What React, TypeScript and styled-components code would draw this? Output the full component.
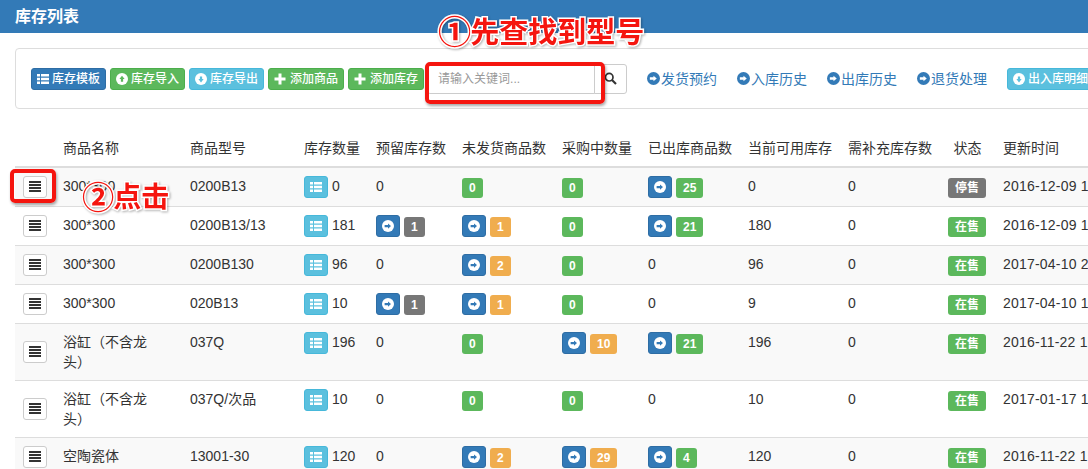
import styled, { createGlobalStyle } from "styled-components";

const GlobalStyle = createGlobalStyle`
  html, body {
    margin: 0;
    padding: 0;
    background: #fff;
  }
  body {
    font-family: "Liberation Sans", "Noto Sans CJK SC", sans-serif;
    font-size: 14px;
    line-height: 20px;
    color: #333;
    text-spacing-trim: space-all;
  }
`;

const Page = styled.div`
  position: relative;
  width: 1088px;
  height: 469px;
  overflow: hidden;
`;

const Header = styled.div`
  height: 33px;
  width: 1088px;
  padding: 0 15px;
  box-sizing: border-box;
  display: flex;
  align-items: center;
  background-color: #337ab7;
  color: #fff;
  font-size: 16px;
  font-weight: 700;
`;

const Content = styled.div`
  width: 1300px;
  padding: 15px 0 0 15px;
  box-sizing: border-box;
`;

const Toolbar = styled.div`
  height: 61px;
  box-sizing: border-box;
  display: flex;
  align-items: center;
  gap: 4px;
  padding: 0 15px;
  border: 1px solid #ddd;
  border-radius: 4px;
`;

const colors = {
  primary: ["#337ab7", "#2e6da4"],
  success: ["#5cb85c", "#4cae4c"],
  info: ["#5bc0de", "#46b8da"],
  warning: ["#f0ad4e", "#f0ad4e"],
  gray: ["#777777", "#777777"],
};
type Tone = keyof typeof colors;

const ToolButton = styled.button<{ $tone: Tone; $wide?: boolean }>`
  flex-shrink: 0;
  height: 22px;
  display: inline-flex;
  align-items: center;
  gap: ${(p) => (p.$wide ? "4px" : "3px")};
  padding: 0 5px;
  border: 1px solid ${(p) => colors[p.$tone][1]};
  border-radius: 3px;
  background-color: ${(p) => colors[p.$tone][0]};
  color: #fff;
  font-family: inherit;
  font-size: 12px;
  font-weight: 500;
  line-height: 1;
  white-space: nowrap;
`;

const SearchGroup = styled.div`
  flex-shrink: 0;
  display: flex;
  height: 30px;
  margin: 0 16px 0 -1px;
`;

const SearchInput = styled.input`
  width: 168px;
  height: 30px;
  box-sizing: border-box;
  padding: 0 10px;
  border: 1px solid #ccc;
  border-radius: 3px 0 0 3px;
  font-family: inherit;
  font-size: 12px;
  outline: none;
  &::placeholder {
    color: #999;
  }
`;

const SearchButton = styled.button`
  width: 33px;
  height: 30px;
  margin-left: -1px;
  display: flex;
  align-items: center;
  justify-content: center;
  padding: 0;
  background: #fff;
  border: 1px solid #ccc;
  border-radius: 0 3px 3px 0;
  color: #333;
`;

const HistoryLink = styled.a`
  --arrow: #fff;
  flex-shrink: 0;
  display: inline-flex;
  align-items: center;
  gap: 1px;
  margin-right: 16px;
  color: #337ab7;
  font-size: 14px;
  white-space: nowrap;
`;

const Table = styled.table`
  width: 1180px;
  margin-top: 21px;
  table-layout: fixed;
  border-collapse: collapse;
  border-spacing: 0;
`;

const Col = styled.col<{ $w: number }>`
  width: ${(p) => p.$w}px;
`;

const HeadCell = styled.th<{ $center?: boolean }>`
  padding: 8px;
  height: 20px;
  text-align: ${(p) => (p.$center ? "center" : "left")};
  font-weight: 400;
  white-space: nowrap;
  border-bottom: 2px solid #ddd;
`;

const Row = styled.tr`
  &:nth-child(odd) {
    background-color: #f9f9f9;
  }
`;

const Cell = styled.td<{ $middle?: boolean }>`
  padding: 8px;
  vertical-align: ${(p) => (p.$middle ? "middle" : "top")};
  border-top: 1px solid #ddd;
  tr:first-child > & {
    border-top: none;
  }
`;

const TimeCell = styled(Cell)`
  white-space: nowrap;
  letter-spacing: 0.2px;
`;

const MenuButton = styled.button`
  display: flex;
  align-items: center;
  justify-content: center;
  width: 24px;
  height: 22px;
  padding: 0;
  background: #fff;
  border: 1px solid #ccc;
  border-radius: 3px;
  color: #333;
`;

const CountGroup = styled.div`
  display: flex;
  align-items: flex-start;
  gap: 4px;
`;

const SquareButton = styled.span<{ $tone: Tone }>`
  display: inline-flex;
  align-items: center;
  justify-content: center;
  width: 24px;
  height: 22px;
  box-sizing: border-box;
  border: 1px solid ${(p) => colors[p.$tone][1]};
  border-radius: 3px;
  background-color: ${(p) => colors[p.$tone][0]};
  color: #fff;
`;

const Label = styled.span<{ $tone: Tone }>`
  display: inline-block;
  height: 20px;
  margin-top: 2px;
  padding: 0 7px;
  border-radius: 3px;
  background-color: ${(p) => colors[p.$tone][0]};
  color: #fff;
  font-size: 12px;
  font-weight: 700;
  line-height: 20px;
  white-space: nowrap;
`;

const RedBox = styled.div<{ $x: number; $y: number; $w: number; $h: number }>`
  position: absolute;
  left: ${(p) => p.$x}px;
  top: ${(p) => p.$y}px;
  width: ${(p) => p.$w}px;
  height: ${(p) => p.$h}px;
  box-sizing: border-box;
  border: 4px solid #f5150f;
  border-radius: 5px;
  box-shadow: 1px 2px 3px rgba(0, 0, 0, 0.35);
  pointer-events: none;
`;

const Callout = styled.div<{ $x: number; $y: number; $size: number }>`
  position: absolute;
  left: ${(p) => p.$x}px;
  top: ${(p) => p.$y}px;
  display: flex;
  align-items: center;
  color: #f5150f;
  font-size: ${(p) => p.$size}px;
  font-weight: 700;
  line-height: 32px;
  white-space: nowrap;
  -webkit-text-stroke: 3px #fff;
  paint-order: stroke fill;
  filter: drop-shadow(1px 1px 1px rgba(0, 0, 0, 0.3));
`;

const CircledNum = styled.span`
  font-size: 1.15em;
  line-height: 32px;
  margin: 0 -1px 0 -2px;
`;

const ListIcon = () => (
  <svg width="12" height="12" viewBox="0 0 12 12" fill="currentColor">
    <rect x="0" y="1" width="3" height="2.5" />
    <rect x="4" y="1" width="8" height="2.5" />
    <rect x="0" y="4.75" width="3" height="2.5" />
    <rect x="4" y="4.75" width="8" height="2.5" />
    <rect x="0" y="8.5" width="3" height="2.5" />
    <rect x="4" y="8.5" width="8" height="2.5" />
  </svg>
);

const JustifyIcon = () => (
  <svg width="12" height="12" viewBox="0 0 12 12" fill="currentColor">
    <rect x="0" y="0" width="12" height="2" />
    <rect x="0" y="3" width="12" height="2" />
    <rect x="0" y="6" width="12" height="2" />
    <rect x="0" y="9" width="12" height="2" />
  </svg>
);

const PlusIcon = () => (
  <svg width="12" height="12" viewBox="0 0 12 12" fill="currentColor">
    <path d="M4.5 0.5h3v4h4v3h-4v4h-3v-4h-4v-3h4z" />
  </svg>
);

const SearchIcon = () => (
  <svg width="13" height="13" viewBox="0 0 13 13" fill="none" stroke="currentColor">
    <circle cx="5.2" cy="5.2" r="3.8" strokeWidth="1.7" />
    <path d="M8 8l4 4" strokeWidth="2.2" />
  </svg>
);

const arrows = {
  right: "M8 4.500v2H3.500v3H8v2L12 8z",
  up: "M8 3.500l3.500 4.500h-2v3.500h-3V8h-2z",
  down: "M8 12.500L4.500 8h2V4.500h3V8h2z",
};

const CircleArrow = ({ dir = "right", size = 12 }: { dir?: keyof typeof arrows; size?: number }) => (
  <svg width={size} height={size} viewBox="0 0 16 16">
    <circle cx="8" cy="8" r="8" fill="currentColor" />
    <path d={arrows[dir]} fill="var(--arrow)" />
  </svg>
);

const ArrowHolder = styled.span<{ $tone?: Tone }>`
  display: inline-flex;
  ${(p) => (p.$tone ? `--arrow: ${colors[p.$tone][0]};` : "")}
`;

type Badge = { go?: boolean; n: number; tone: Tone };
type Item = {
  name: string;
  model: string;
  stock: number;
  reserved?: number;
  unshipped: Badge;
  buying: number;
  shipped?: number;
  free: number;
  status: string;
  time: string;
};

const items: Item[] = [
  { name: "300*300", model: "0200B13", stock: 0, unshipped: { n: 0, tone: "success" }, buying: 0, shipped: 25, free: 0, status: "停售", time: "2016-12-09 10:32" },
  { name: "300*300", model: "0200B13/13", stock: 181, reserved: 1, unshipped: { go: true, n: 1, tone: "warning" }, buying: 0, shipped: 21, free: 180, status: "在售", time: "2016-12-09 10:32" },
  { name: "300*300", model: "0200B130", stock: 96, unshipped: { go: true, n: 2, tone: "warning" }, buying: 0, free: 96, status: "在售", time: "2017-04-10 20:15" },
  { name: "300*300", model: "020B13", stock: 10, reserved: 1, unshipped: { go: true, n: 1, tone: "warning" }, buying: 0, free: 9, status: "在售", time: "2017-04-10 10:15" },
  { name: "浴缸（不含龙头）", model: "037Q", stock: 196, unshipped: { n: 0, tone: "success" }, buying: 10, shipped: 21, free: 196, status: "在售", time: "2016-11-22 15:20" },
  { name: "浴缸（不含龙头）", model: "037Q/次品", stock: 10, unshipped: { n: 0, tone: "success" }, buying: 0, free: 10, status: "在售", time: "2017-01-17 11:05" },
  { name: "空陶瓷体", model: "13001-30", stock: 120, unshipped: { go: true, n: 2, tone: "warning" }, buying: 29, shipped: 4, free: 120, status: "在售", time: "2016-11-22 15:20" },
];

const columns = [
  { title: "", w: 40 },
  { title: "商品名称", w: 127 },
  { title: "商品型号", w: 114 },
  { title: "库存数量", w: 72 },
  { title: "预留库存数", w: 86 },
  { title: "未发货商品数", w: 100 },
  { title: "采购中数量", w: 86 },
  { title: "已出库商品数", w: 100 },
  { title: "当前可用库存", w: 100 },
  { title: "需补充库存数", w: 100 },
  { title: "状态", w: 55 },
  { title: "更新时间", w: 200 },
];

const Count = ({ badge }: { badge: Badge }) => (
  <CountGroup>
    {badge.go && (
      <SquareButton $tone="primary">
        <ArrowHolder $tone="primary">
          <CircleArrow />
        </ArrowHolder>
      </SquareButton>
    )}
    <Label $tone={badge.tone}>{badge.n}</Label>
  </CountGroup>
);

const App = () => {
  return (
    <Page>
      <GlobalStyle />
      <Header>库存列表</Header>
      <Content>
        <Toolbar>
          <ToolButton $tone="primary">
            <ListIcon />
            库存模板
          </ToolButton>
          <ToolButton $tone="success">
            <ArrowHolder $tone="success">
              <CircleArrow dir="up" />
            </ArrowHolder>
            库存导入
          </ToolButton>
          <ToolButton $tone="info">
            <ArrowHolder $tone="info">
              <CircleArrow dir="down" />
            </ArrowHolder>
            库存导出
          </ToolButton>
          <ToolButton $tone="success" $wide>
            <PlusIcon />
            添加商品
          </ToolButton>
          <ToolButton $tone="success" $wide>
            <PlusIcon />
            添加库存
          </ToolButton>
          <SearchGroup>
            <SearchInput placeholder="请输入关键词..." />
            <SearchButton>
              <SearchIcon />
            </SearchButton>
          </SearchGroup>
          {["发货预约", "入库历史", "出库历史", "退货处理"].map((text) => (
            <HistoryLink key={text}>
              <ArrowHolder>
                <CircleArrow size={13} />
              </ArrowHolder>
              {text}
            </HistoryLink>
          ))}
          <ToolButton $tone="info">
            <ArrowHolder $tone="info">
              <CircleArrow dir="down" />
            </ArrowHolder>
            出入库明细
          </ToolButton>
        </Toolbar>
        <Table>
          <colgroup>
            {columns.map((c, i) => (
              <Col key={i} $w={c.w} />
            ))}
          </colgroup>
          <thead>
            <tr>
              {columns.map((c, i) => (
                <HeadCell key={i} $center={c.title === "状态"}>
                  {c.title}
                </HeadCell>
              ))}
            </tr>
          </thead>
          <tbody>
            {items.map((item, i) => (
              <Row key={i}>
                <Cell $middle>
                  <MenuButton>
                    <JustifyIcon />
                  </MenuButton>
                </Cell>
                <Cell>{item.name}</Cell>
                <Cell>{item.model}</Cell>
                <Cell>
                  <CountGroup>
                    <SquareButton $tone="info">
                      <ListIcon />
                    </SquareButton>
                    {item.stock}
                  </CountGroup>
                </Cell>
                <Cell>
                  {item.reserved ? (
                    <Count badge={{ go: true, n: item.reserved, tone: "gray" }} />
                  ) : (
                    0
                  )}
                </Cell>
                <Cell>
                  <Count badge={item.unshipped} />
                </Cell>
                <Cell>
                  {item.buying ? (
                    <Count badge={{ go: true, n: item.buying, tone: "warning" }} />
                  ) : (
                    <Count badge={{ n: 0, tone: "success" }} />
                  )}
                </Cell>
                <Cell>
                  {item.shipped ? <Count badge={{ go: true, n: item.shipped, tone: "success" }} /> : 0}
                </Cell>
                <Cell>{item.free}</Cell>
                <Cell>0</Cell>
                <Cell>
                  <Label $tone={item.status === "停售" ? "gray" : "success"}>{item.status}</Label>
                </Cell>
                <TimeCell>{item.time}</TimeCell>
              </Row>
            ))}
          </tbody>
        </Table>
      </Content>
      <RedBox $x={425} $y={62} $w={180} $h={42} />
      <RedBox $x={10} $y={169} $w={46} $h={34} />
      <Callout $x={440} $y={17} $size={29}>
        <CircledNum>①</CircledNum>先查找到型号
      </Callout>
      <Callout $x={84} $y={182} $size={28}>
        <CircledNum>②</CircledNum>点击
      </Callout>
    </Page>
  );
};

export default App;
